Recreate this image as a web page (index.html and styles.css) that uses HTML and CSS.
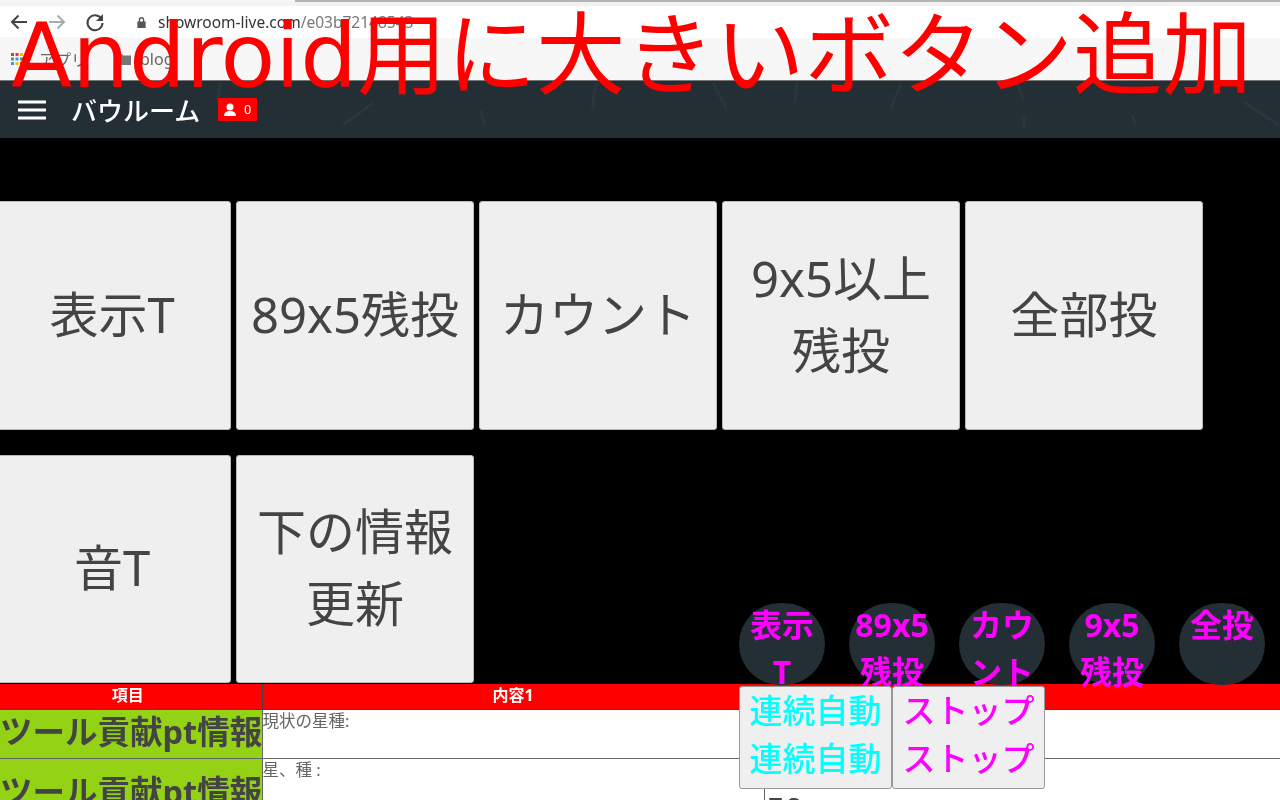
FILE: index.html
```html
<!DOCTYPE html>
<html lang="ja">
<head>
<meta charset="utf-8">
<title>バウルーム</title>
<link rel="stylesheet" href="styles.css">
</head>
<body>
<div class="chrome">
  <div class="toolbar">
    <svg class="nav" viewBox="0 0 24 24" width="24" height="24"><path d="M20 12H5M11.500 5.500 5 12l6.500 6.500" fill="none" stroke="#444" stroke-width="2"/></svg>
    <svg class="nav" viewBox="0 0 24 24" width="24" height="24"><path d="M4 12h15M12.500 5.500 19 12l-6.500 6.500" fill="none" stroke="#aaa" stroke-width="2"/></svg>
    <svg class="nav" viewBox="0 0 24 24" width="24" height="24"><path d="M18.500 9A7.500 7.500 0 1 0 19.500 13" fill="none" stroke="#444" stroke-width="2"/><path d="M20 4v7h-7z" fill="#444"/></svg>
    <div class="url">
      <svg viewBox="0 0 12 14" width="11" height="13"><path d="M3 6V4a3 3 0 0 1 6 0v2h1.500v7h-9V6zM4.500 6h3V4a1.500 1.500 0 0 0-3 0z" fill="#555"/></svg>
      <span class="host">showroom-live.com</span><span class="path">/e03b72148543</span>
    </div>
  </div>
  <div class="bookmarks">
    <svg viewBox="0 0 12 12" width="12" height="12"><g><rect width="3" height="3" fill="#e33"/><rect x="4.500" width="3" height="3" fill="#e33"/><rect x="9" width="3" height="3" fill="#fb0"/><rect y="4.500" width="3" height="3" fill="#3a5"/><rect x="4.500" y="4.500" width="3" height="3" fill="#39e"/><rect x="9" y="4.500" width="3" height="3" fill="#3a5"/><rect y="9" width="3" height="3" fill="#39e"/><rect x="4.500" y="9" width="3" height="3" fill="#fb0"/><rect x="9" y="9" width="3" height="3" fill="#e33"/></g></svg>
    <span class="mark">アプリ</span>
    <svg class="folder" viewBox="0 0 14 12" width="14" height="12"><path d="M0 1h5l1 1.500h8V12H0z" fill="#777"/></svg>
    <span class="mark">blog</span>
  </div>
</div>

<header class="head">
  <svg class="pattern" viewBox="0 0 1280 57" width="1280" height="57"><path d="M220 2l-2 17M373 22l-30 22M481 29l3 15M596 2l-4 27M713 2l13 25M797 2l-2 20M901 2l-10 25M1017 2l7 17M1024 34v12M1132 34l4 12M1244 21l35 23" fill="none" stroke="#26383e" stroke-width="3"/><path d="M461 14H1060" fill="none" stroke="#273339" stroke-width="1"/></svg>
  <svg class="burger" viewBox="0 0 30 20" width="30" height="20"><path d="M1 2h28M1 10h28M1 18h28" stroke="#fff" stroke-width="3"/></svg>
  <span class="room">バウルーム</span>
  <span class="badge"><svg viewBox="0 0 12 14" width="12" height="14"><circle cx="6" cy="4" r="3.500" fill="#fff"/><path d="M0 13c0-4 3-5 6-5s6 1 6 5z" fill="#fff"/></svg>0</span>
</header>

<main class="stage">
  <div class="grid">
    <button class="big">表示T</button>
    <button class="big">89x5残投</button>
    <button class="big">カウント</button>
    <button class="big">9x5以上<br>残投</button>
    <button class="big">全部投</button>
    <button class="big">音T</button>
    <button class="big">下の情報<br>更新</button>
  </div>
</main>

<table class="info">
  <tr><th class="c1">項目</th><th class="c2">内容1</th><th class="c3">内容2</th></tr>
  <tr class="r1"><td class="c1">ツール貢献pt情報</td><td>現状の星種:</td><td class="c3"></td></tr>
  <tr class="r2"><td class="c1">ツール貢献pt情報</td><td>星、種 :</td><td class="c3 num">50</td></tr>
</table>

<div class="rounds">
  <div class="round"><span class="label">表示T</span></div>
  <div class="round"><span class="label">89x5残投</span></div>
  <div class="round"><span class="label">カウント</span></div>
  <div class="round"><span class="label">9x5残投</span></div>
  <div class="round"><span class="label">全投</span></div>
</div>

<div class="autos">
  <button class="auto cyan">連続自動<br>連続自動</button>
  <button class="auto pink">ストップ<br>ストップ</button>
</div>

<div class="caption">Android用に大きいボタン追加</div>
</body>
</html>
```
FILE: styles.css
```css
html, body {
  margin: 0;
  height: 800px;
  overflow: hidden;
  background: #000;
  font-family: "Noto Sans", "Noto Sans CJK JP", sans-serif;
}
.chrome, .head, .stage, .info, .rounds, .autos {
  filter: blur(0.4px);
}
.chrome {
  height: 81px;
  background: #f7f7f7;
  box-sizing: border-box;
  border-bottom: 1px solid #777;
  overflow: hidden;
}
.chrome::before {
  content: "";
  display: block;
  height: 2px;
  margin-left: 295px;
  background: #b5b5b5;
}
.toolbar {
  height: 36px;
  box-sizing: border-box;
  padding: 4px 0 0 7px;
  display: flex;
  align-items: center;
  gap: 14px;
  background: linear-gradient(#f3f3f3 4px, #fff 4px, #fff 35px, #f7f7f7 35px);
}
.nav { flex: none; }
.url {
  margin-left: -4px;
  flex: 1;
  height: 31px;
  display: flex;
  align-items: center;
  padding-left: 19px;
  font-size: 15.500px;
  background: #fff;
  border-radius: 16px 0 0 16px;
}
.url svg { margin-right: 11px; }
.host { color: #333; }
.path { color: #777; }
.bookmarks {
  height: 42px;
  display: flex;
  align-items: center;
  padding-left: 11px;
  font-size: 16px;
  color: #666;
}
.mark { margin-left: 16px; margin-right: 30px; }
.mark:last-child { margin-left: 9px; }
.folder { margin-left: 0; }
.head {
  position: relative;
  height: 57px;
  background: #232e35;
  display: flex;
  align-items: center;
  padding-left: 17px;
  color: #fff;
}
.pattern { position: absolute; left: 0; top: 0; }
.burger { position: relative; margin-right: 24px; }
.room { position: relative; font-size: 26px; font-weight: 500; margin-right: 18px; }
.badge {
  position: relative;
  width: 39px;
  height: 23px;
  background: #f00;
  display: flex;
  align-items: center;
  justify-content: center;
  gap: 8px;
  font: 13px "Roboto", sans-serif;
}
.stage {
  height: 546px;
  box-sizing: border-box;
  padding: 63px 0 0;
  overflow: hidden;
}
.grid {
  margin-left: -7px;
  display: grid;
  grid-template-columns: repeat(5, 238px);
  grid-template-rows: 229px 228px;
  column-gap: 5px;
  row-gap: 25px;
}
.big {
  margin: 0;
  padding: 0 0 4px;
  background: #efefef;
  border: 1px solid #bbb;
  border-radius: 3px;
  color: #444;
  font-family: inherit;
  font-size: 49px;
  line-height: 72px;
}
.info {
  width: 1280px;
  border-collapse: collapse;
  table-layout: fixed;
  background: #fff;
}
.info th {
  height: 25px;
  padding: 0 0 3px;
  box-sizing: border-box;
  background: #f00;
  color: #fff;
  font-size: 16px;
  line-height: 20px;
  font-weight: 700;
  border-right: 1px solid #444;
  border-bottom: 1px solid #444;
}
.info .c1 { width: 262px; }
.info th.c1 { padding-right: 6px; }
.info .c2 { width: 502px; }
.info .c3 { border-right: 0; }
.info td {
  padding: 0;
  vertical-align: top;
  border-right: 1px solid #666;
  border-bottom: 1px solid #666;
  font-size: 16.500px;
  line-height: 21px;
  color: #666;
}
.info td.c1 {
  padding: 0 0 4px;
  background: #94d215;
  color: #444;
  font-size: 32.500px;
  font-weight: 700;
  line-height: 44px;
  white-space: nowrap;
  vertical-align: middle;
  text-align: right;
}
.info td.num {
  padding: 30px 0 0 2px;
  color: #444;
  font-size: 32px;
  font-weight: 700;
  line-height: 40px;
}
.r1 { height: 49px; }
.r2 { height: 60px; }
.rounds {
  position: fixed;
  left: 739px;
  top: 603px;
  display: flex;
  gap: 24px;
}
.round {
  width: 86px;
  height: 82px;
  box-sizing: border-box;
  padding: 0 3px;
  display: flow-root;
  border-radius: 43px;
  background: #232e35;
  color: #f0f;
  font-size: 32px;
  font-weight: 700;
  line-height: 47px;
  text-align: center;
  word-break: break-all;
}
.label { display: block; margin: -2px -3px 0 -3px; padding: 0 4px; }
.autos {
  position: fixed;
  left: 739px;
  top: 686px;
  display: flex;
}
.auto {
  margin: 0;
  padding: 0 0 6px;
  width: 153px;
  height: 103px;
  background: #efefef;
  border: 1px solid #999;
  border-radius: 3px;
  font-family: inherit;
  font-size: 33px;
  font-weight: 500;
  line-height: 48px;
}
.cyan { color: #0ff; }
.pink { color: #f0f; }
.caption {
  position: fixed;
  left: 11px;
  top: 4px;
  color: #f00;
  font-family: "DejaVu Sans", "Noto Sans CJK JP", sans-serif;
  font-size: 89.500px;
  line-height: 104px;
  white-space: nowrap;
}
```
